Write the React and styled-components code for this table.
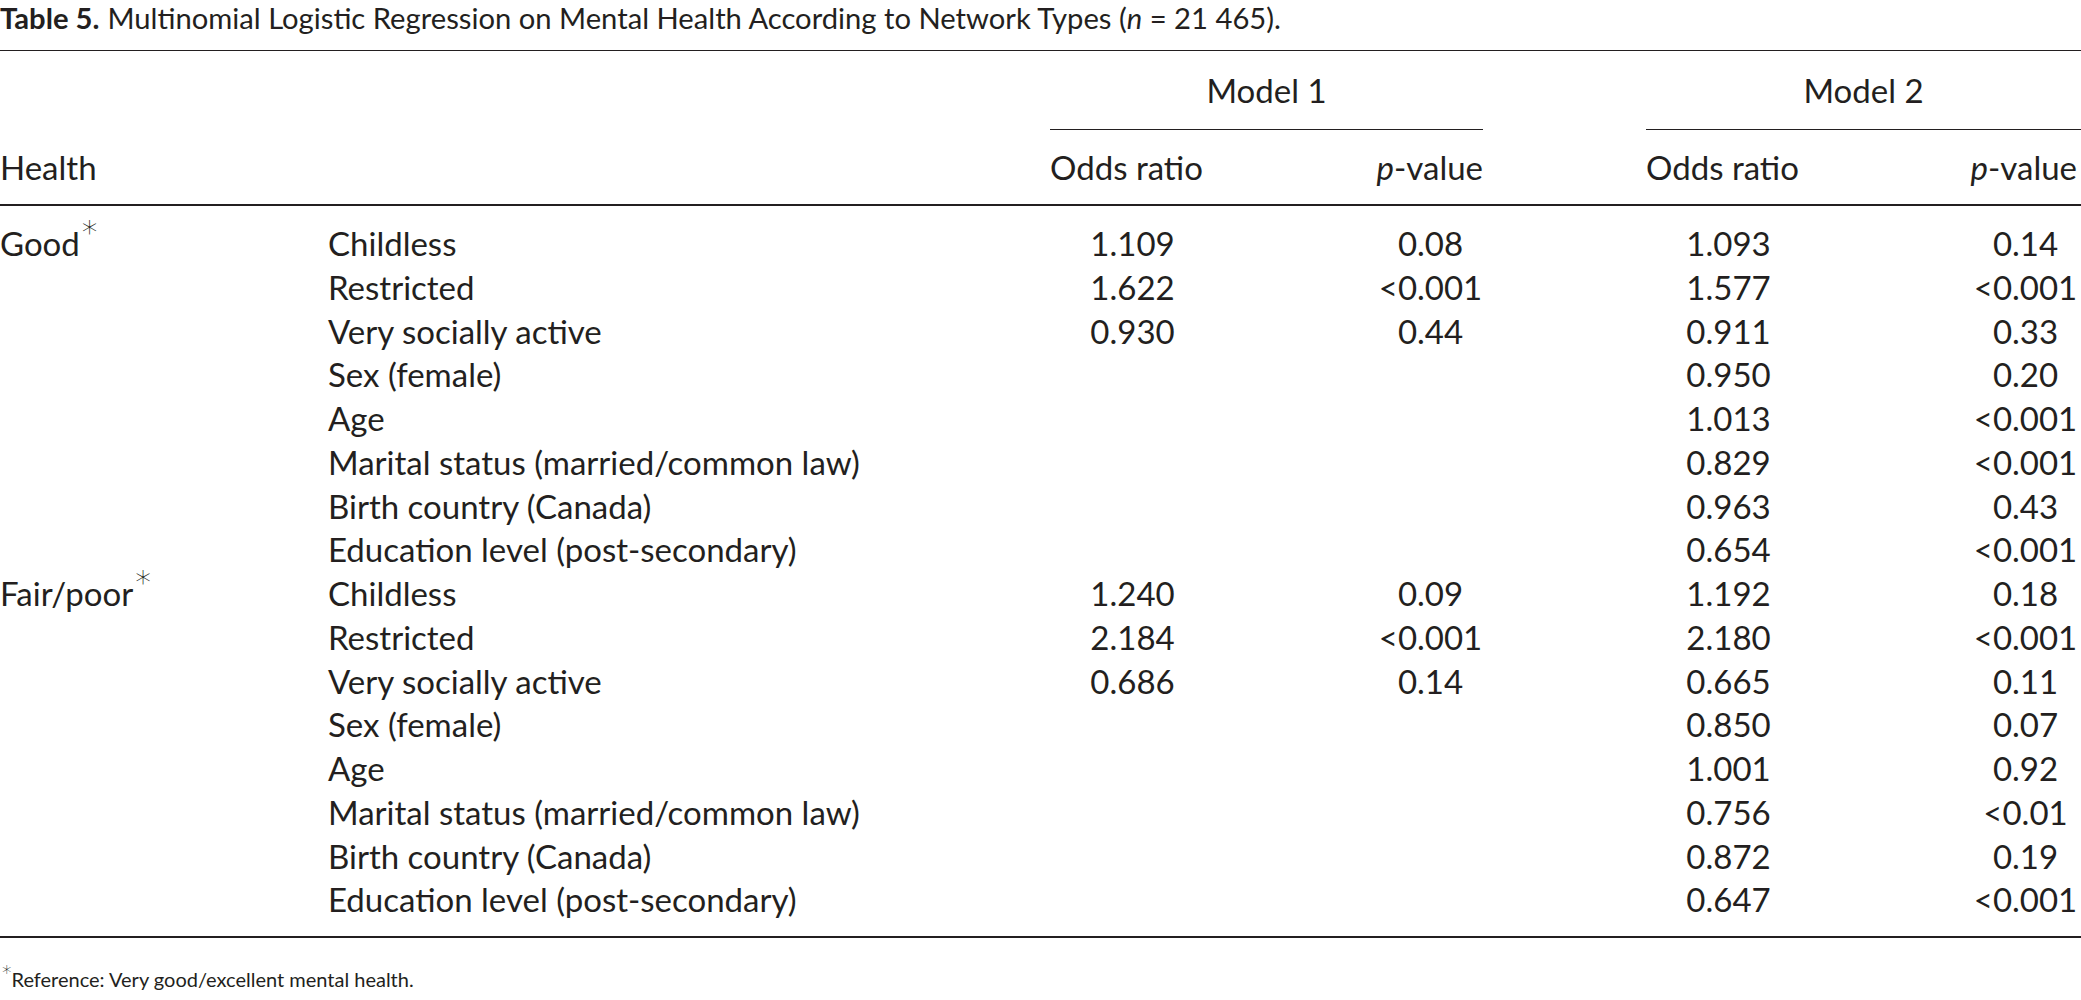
import React from 'react';
import styled, { createGlobalStyle } from 'styled-components';

//  STYLE
const GlobalStyle = createGlobalStyle`
  html, body {
    margin: 0;
    padding: 0;
    background: #ffffff;
    overflow: hidden;
  }
  body {
    font-family: Lato, 'Open Sans', sans-serif;
    color: #231f20;
  }
`;

export const Page = styled.section`
  display: flex;
  flex-direction: column;
  width: 2081px;
`;

export const Caption = styled.div`
  height: 50px;
  font-size: 29.2px;
  line-height: 36px;
  white-space: nowrap;
`;

export const CaptionLabel = styled.b`
  font-weight: 700;
  margin-right: 8px;
`;

export const Table = styled.table`
  width: 2081px;
  table-layout: fixed;
  border-collapse: collapse;
  border-top: 1.5px solid #231f20;
  border-bottom: 2px solid #231f20;
  font-size: 33px;
`;

export const HeadCell = styled.th`
  font-weight: 400;
  padding: 0;
  padding-left: ${(p) => p.$pad || 0}px;
  padding-right: ${(p) => p.$padR || 0}px;
  height: ${(p) => p.$h || 74}px;
  text-align: ${(p) => p.$align || 'left'};
  vertical-align: middle;
  white-space: nowrap;
  border-bottom: ${(p) => (p.$rule ? '1.5px solid #231f20' : 'none')};
`;

export const HeadRow = styled.tr`
  border-bottom: ${(p) => (p.$rule ? '2px solid #231f20' : 'none')};
`;

export const Body = styled.tbody`
  tr:first-child td {
    padding-top: 16px;
  }
  tr:last-child td {
    padding-bottom: 14px;
  }
`;

export const Cell = styled.td`
  padding: 0;
  padding-left: ${(p) => p.$pad || 0}px;
  height: 43.75px;
  line-height: 43.75px;
  text-align: ${(p) => (p.$num ? 'center' : 'left')};
  vertical-align: top;
  white-space: nowrap;
`;

export const Star = styled.sup`
  font-family: 'DejaVu Sans', Lato, sans-serif;
  font-size: 0.95em;
  font-weight: 200;
  line-height: 0;
  vertical-align: 0.42em;
  margin-left: 2px;
`;

export const Note = styled.div`
  padding-top: 27px;
  font-size: 20px;
  line-height: 28px;
  white-space: nowrap;
`;

//  DATA
const groups = [
  {
    label: 'Good',
    rows: [
      ['Childless', '1.109', '0.08', '1.093', '0.14'],
      ['Restricted', '1.622', '<0.001', '1.577', '<0.001'],
      ['Very socially active', '0.930', '0.44', '0.911', '0.33'],
      ['Sex (female)', '', '', '0.950', '0.20'],
      ['Age', '', '', '1.013', '<0.001'],
      ['Marital status (married/common law)', '', '', '0.829', '<0.001'],
      ['Birth country (Canada)', '', '', '0.963', '0.43'],
      ['Education level (post-secondary)', '', '', '0.654', '<0.001'],
    ],
  },
  {
    label: 'Fair/poor',
    rows: [
      ['Childless', '1.240', '0.09', '1.192', '0.18'],
      ['Restricted', '2.184', '<0.001', '2.180', '<0.001'],
      ['Very socially active', '0.686', '0.14', '0.665', '0.11'],
      ['Sex (female)', '', '', '0.850', '0.07'],
      ['Age', '', '', '1.001', '0.92'],
      ['Marital status (married/common law)', '', '', '0.756', '<0.01'],
      ['Birth country (Canada)', '', '', '0.872', '0.19'],
      ['Education level (post-secondary)', '', '', '0.647', '<0.001'],
    ],
  },
];

const widths = [328, 722, 165, 268, 163, 165, 270];

//  MAIN
const App = () => {
  return (
    <Page id='Table5'>
      <GlobalStyle />
      <Caption>
        <CaptionLabel>Table 5.</CaptionLabel>
        Multinomial Logistic Regression on Mental Health According to Network
        Types (<i>n</i> = 21 465).
      </Caption>
      <Table>
        <colgroup>
          {widths.map((w, i) => (
            <col key={i} style={{ width: w }} />
          ))}
        </colgroup>
        <thead>
          <HeadRow>
            <HeadCell $h={78} />
            <HeadCell $h={78} />
            <HeadCell $h={78} colSpan={2} $align='center' $rule>
              Model 1
            </HeadCell>
            <HeadCell $h={78} />
            <HeadCell $h={78} colSpan={2} $align='center' $rule>
              Model 2
            </HeadCell>
          </HeadRow>
          <HeadRow $rule>
            <HeadCell>Health</HeadCell>
            <HeadCell />
            <HeadCell>Odds ratio</HeadCell>
            <HeadCell $align='right'>
              <i>p</i>-value
            </HeadCell>
            <HeadCell />
            <HeadCell>Odds ratio</HeadCell>
            <HeadCell $align='right' $padR={4}>
              <i>p</i>-value
            </HeadCell>
          </HeadRow>
        </thead>
        <Body>
          {groups.map((g) =>
            g.rows.map((r, i) => (
              <tr key={g.label + i}>
                <Cell>
                  {i === 0 && (
                    <>
                      {g.label}
                      <Star>*</Star>
                    </>
                  )}
                </Cell>
                <Cell>{r[0]}</Cell>
                <Cell $num>{r[1]}</Cell>
                <Cell $num $pad={163}>
                  {r[2]}
                </Cell>
                <Cell />
                <Cell $num>{r[3]}</Cell>
                <Cell $num $pad={159}>
                  {r[4]}
                </Cell>
              </tr>
            ))
          )}
        </Body>
      </Table>
      <Note>
        <Star>*</Star>Reference: Very good/excellent mental health.
      </Note>
    </Page>
  );
};

export default App;
